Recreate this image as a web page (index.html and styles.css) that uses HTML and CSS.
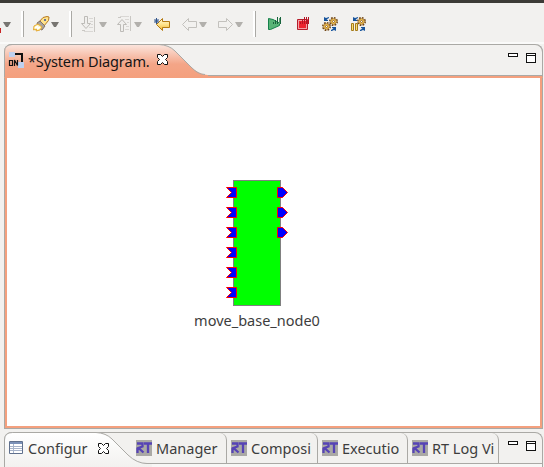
FILE: index.html
```
<!DOCTYPE html>
<html lang="en">
<head>
<meta charset="utf-8">
<title>System Diagram</title>
<link rel="stylesheet" href="styles.css">
</head>
<body>
<svg class="defs" aria-hidden="true">
  <defs>
    <linearGradient id="gold" x2="0" y2="1"><stop stop-color="#fffbe0"/><stop offset=".5" stop-color="#ffe38a"/><stop offset="1" stop-color="#efb530"/></linearGradient>
    <linearGradient id="orange" x2="0" y2="1"><stop stop-color="#fbe4dc"/><stop offset=".6" stop-color="#f4a587"/><stop offset="1" stop-color="#f4a07e"/></linearGradient>
    <linearGradient id="pale" x2="0" y2="1"><stop stop-color="#fff"/><stop offset="1" stop-color="#f2f1ef"/></linearGradient>
    <symbol id="close" viewBox="0 0 11 11"><path d="M.5.5h3l2 2 2-2h3v3l-2 2 2 2v3h-3l-2-2-2 2h-3v-3l2-2-2-2z" fill="#fff" stroke="#111"/></symbol>
    <symbol id="back" viewBox="0 0 15 13"><path d="M.5 6.500 6.500.5v3h8v6h-8v3z"/></symbol>
    <symbol id="gear" viewBox="0 0 9 9"><circle cx="4.500" cy="4.500" r="3.700" fill="none" stroke="#704513" stroke-width="1.600" stroke-dasharray="1.700 1.200"/><circle cx="4.500" cy="4.500" r="2.800" fill="#f9cd58" stroke="#a06a20" stroke-width=".8"/><circle cx="4.500" cy="4.500" r="1" fill="#fff" stroke="#80501a" stroke-width=".8"/></symbol>
    <symbol id="turns" viewBox="0 0 16 14"><path d="M2 0v4h4V3L4.500 2.500 7 1V0L4 1zM14 14v-4h-4v1l1.500.5L9 13v1h1l2-1z" fill="#17549c"/></symbol>
    <symbol id="in" viewBox="0 0 11 11"><path d="M.5.5h10v10H.5l5-5z" fill="#00f" stroke="red"/></symbol>
    <symbol id="out" viewBox="0 0 11 11"><path d="M.5.5h5l5 5-5 5h-5z" fill="#00f" stroke="red"/></symbol>
    <symbol id="rt" viewBox="0 0 16 16"><path d="M0 0h16v16H0z" fill="#aaa9a5"/><path d="M1 3.500h5.500v3L2.500 8l5 4.500M1.500 8v5M8 3.500h8M12 3v10" fill="none" stroke="#5643b5" stroke-width="2.300"/></symbol>
  </defs>
</svg>
<div class="window">
  <header class="toolbar">
    <svg class="edge" viewBox="0 0 2 5"><path d="M0 0h1v5H0z" fill="#c82525"/></svg>
    <i class="drop first"></i>
    <i class="sep s1"></i>
    <svg class="rocket" viewBox="0 0 17 16"><path d="M6 6 10 1.500l4-1 2 .5-.5 3.500-5 6z" fill="#ffe28a" stroke="#b77b20"/><path d="m4 7 3-2 5 5-3 4-3-1z" fill="#a9a39c" stroke="#837368"/><path d="m5 8-4 2-.5 4 3-1-.5 2 4-1 2-3z" fill="#fff0a0" stroke="#e5aa33"/><path d="m2 12 3-2M4 13l3-2" stroke="#fff" stroke-width="2"/><circle cx="12" cy="4" r="1" fill="#334e9a"/></svg>
    <i class="drop d1"></i>
    <i class="sep s2"></i>
    <svg class="annot" viewBox="0 0 15 17"><path d="M3.500.5h3v7h3l-4.500 5-4.500-5h3z" fill="#f0efed" stroke="#bdbbb7"/><path d="M8 2.500h4M9 5.500h3M10 8.500h2M8 11.500h4M3 15.500h9" stroke="#d9d7d4"/><path d="M13.500 1v15M1 14.500h3" stroke="#c9c7c3"/></svg>
    <i class="drop off d2"></i>
    <svg class="annot a2" viewBox="0 0 15 17"><path d="M3.500 15.500h3v-7h3L5 3.500.5 8.500h3z" fill="#f0efed" stroke="#bdbbb7"/><path d="M3 .5h9M8 3.500h4M10 6.500h2M9 10.500h3M8 13.500h4" stroke="#d9d7d4"/><path d="M13.500 0v15M1 1.500h3" stroke="#c9c7c3"/></svg>
    <i class="drop off d3"></i>
    <svg class="last" viewBox="0 0 17 13"><path d="M2.500 6.500 8.500.5v3h7v6h-7v3z" fill="url(#gold)" stroke="#b47a12"/><path d="M2.500 0v6M0 3h5M.5 1l4 4M4.500 1l-4 4" stroke="#31558b"/></svg>
    <svg class="nav n1"><use href="#back"/></svg>
    <i class="drop off d4"></i>
    <svg class="nav n2"><use href="#back"/></svg>
    <i class="drop off d5"></i>
    <i class="sep s3"></i>
    <svg class="run" viewBox="0 0 14 14"><path d="M.5 1.500v11h2l9-4V6L5 2.500z" fill="#58b477" stroke="#16814b"/><path d="M5.500 7V5M7.500 7V3M9.500 7V0M12.500 0v7" stroke="#17633c"/><path d="M11.500 1v6" stroke="#5aa171"/></svg>
    <svg class="stop" viewBox="0 0 13 14"><path d="M.5 2.500h10v10H.5z" fill="#f3a2a7" stroke="#b51d2b"/><path d="M2 4h7v7H2z" fill="#ed2530"/><path d="M3.500 7V5M5.500 7V3M7.500 7V0M9.500 7V0M11.500 7V0" stroke="#b51524"/></svg>
    <svg class="gears" viewBox="0 0 16 14"><use href="#turns" width="16" height="14"/><use href="#gear" x="7" width="9" height="9"/><use href="#gear" y="5" width="9" height="9"/></svg>
    <svg class="gears g2" viewBox="0 0 16 14"><use href="#turns" width="16" height="14"/><use href="#gear" x="6" width="9" height="9"/><path d="M.5 6.500h2v7h-2zM4.500 6.500h2v7h-2z" fill="#f8de78" stroke="#a57b1a"/></svg>
  </header>
  <main class="workbench">
    <section class="editor">
      <div class="editor-head">
        <svg class="tab-shape" viewBox="0 0 201 33"><path d="M0 33V8Q0 1 8 1H155Q165 1 171 7L187 23Q196 31 204 31V33Z" fill="url(#orange)"/><path d="M.5 33V8Q.5.5 8.500.5H155Q165 1 171 7L187 23Q194 30.500 201 30.500" fill="none" stroke="#aaa9a5"/></svg>
        <div class="editor-tab">
          <svg class="diagram-icon" viewBox="0 0 16 16"><path d="M5 2h8v9" fill="none" stroke="#111" stroke-width="2"/><path d="M0 0h6v5H0zM9 10h6v6H9z" fill="#bed0ef"/><path d="M.5 8.500h3v5h-3zM5.500 14V8l3 5.500V8" fill="none" stroke="#111" stroke-width="1.200"/></svg>
          <span class="title">*System Diagram.</span>
          <svg class="x"><use href="#close"/></svg>
        </div>
        <div class="controls"><i class="min"></i><i class="max"></i></div>
      </div>
      <div class="canvas">
        <div class="node">
          <div class="component">
            <div class="ports inputs"><svg><use href="#in"/></svg><svg><use href="#in"/></svg><svg><use href="#in"/></svg><svg><use href="#in"/></svg><svg><use href="#in"/></svg><svg><use href="#in"/></svg></div>
            <div class="ports outputs"><svg><use href="#out"/></svg><svg><use href="#out"/></svg><svg><use href="#out"/></svg></div>
          </div>
          <span class="node-name">move_base_node0</span>
        </div>
      </div>
    </section>
    <section class="views">
      <svg class="view-shape" viewBox="0 0 148 36"><path d="M.5 36V8Q.5.5 8.500.5H92Q102 1 108 7L124 23Q133 31.500 143 31.500H148V36Z" fill="url(#pale)"/><path d="M.5 36V8Q.5.500 8.500.5H92Q102 1 108 7L124 23Q133 31.500 143 31.500H148" fill="none" stroke="#aaa9a5"/></svg>
      <div class="view-tab active"><svg class="table" viewBox="0 0 14 13"><path d="M.5.5h13v12H.5z" fill="#fff" stroke="#60708d"/><path d="M1 1h12v2H1z" fill="#7b91b8"/><path d="M1 5.500h12M1 7.500h12M1 9.500h12M4.500 3v9" stroke="#a8b4ca"/></svg><span class="t-config">Configur</span><svg class="x"><use href="#close"/></svg></div>
      <div class="view-tab manager"><svg class="rt"><use href="#rt"/></svg><span class="t-manager">Manager</span></div>
      <div class="view-tab composite"><svg class="rt"><use href="#rt"/></svg><span class="t-comp">Composi</span></div>
      <div class="view-tab execution"><svg class="rt"><use href="#rt"/></svg><span class="t-exec">Executio</span></div>
      <div class="view-tab log"><svg class="rt"><use href="#rt"/></svg><span class="t-log">RT Log Vi</span></div>
      <div class="controls"><i class="min"></i><i class="max"></i></div>
    </section>
  </main>
</div>
</body>
</html>
```
FILE: styles.css
```
* { box-sizing: border-box; }
body { margin: 0; background: #f2f1ef; color: #3d3d3d; font: 14.5px/20px "Noto Sans", "Open Sans", sans-serif; }
svg { display: block; flex: none; overflow: visible; }
.defs { position: absolute; width: 0; height: 0; }
.window { width: 544px; height: 467px; overflow: hidden; }
.toolbar { display: flex; align-items: flex-start; height: 44px; border-top: 3px solid #3c3b37; border-bottom: 2px solid #fafaf9; background: #f2f1ef; }
.edge { width: 2px; height: 5px; margin-top: 25px; }
.drop { flex: none; width: 8px; height: 5px; margin-top: 19px; background: #777571; clip-path: polygon(0 0, 100% 0, 62% 100%, 38% 100%); }
.drop.off { background: #b2b0ac; }
.first { margin-left: 1px; }
.sep { flex: none; width: 3px; height: 26px; margin-top: 8px; border-left: 2px solid #fff; border-right: 1px solid #aaa9a5; }
.s1 { margin-left: 10px; }
.rocket { width: 17px; height: 16px; margin: 13px 0 0 9px; }
.d1 { margin-left: 1px; }
.s2 { margin-left: 10px; }
.annot { width: 15px; height: 17px; margin: 13px 0 0 9px; }
.d2 { margin-left: 3px; }
.a2 { margin-left: 10px; }
.d3 { margin-left: 2px; }
.last { width: 17px; height: 13px; margin: 15px 0 0 12px; }
.nav { width: 15px; height: 13px; margin-top: 15px; fill: #f2f1ef; stroke: #c3c1bd; }
.n1 { margin-left: 11px; }
.d4 { margin-left: 2px; }
.n2 { margin-left: 11px; transform: scaleX(-1); }
.d5 { margin-left: 2px; }
.s3 { margin-left: 10px; }
.run { width: 14px; height: 14px; margin: 14px 0 0 12px; }
.stop { width: 13px; height: 14px; margin: 14px 0 0 15px; }
.gears { width: 16px; height: 14px; margin: 14px 0 0 12px; }
.g2 { margin-left: 13px; }
.workbench { display: grid; grid-template-rows: 385px 1fr; gap: 3px; width: 539px; height: 423px; margin-left: 4px; }
.editor { display: grid; grid-template-rows: 34px 1fr; border: 1px solid #aaa9a5; border-top: 0; border-radius: 8px 8px 0 0; }
.editor-head { position: relative; display: flex; justify-content: space-between; margin: 0 -1px; border: 1px solid #aaa9a5; border-bottom: 2px solid #f4a07e; border-radius: 8px 8px 0 0; background: linear-gradient(#f2f1ef 30px, #aaa9a5 30px, #aaa9a5 31px, #f4a07e 31px); }
.tab-shape { position: absolute; left: -1px; top: -1px; width: 201px; height: 33px; }
.editor-tab { position: relative; display: flex; padding: 7px 0 0 4px; color: #151515; }
.diagram-icon { width: 16px; height: 16px; }
.title { width: 121px; margin: -1px 0 0 3px; letter-spacing: -.13px; white-space: nowrap; }
.x { width: 11px; height: 11px; margin: 3px 0 0 8px; }
.editor-tab .x { margin-top: 2px; }
.controls { display: flex; gap: 8px; padding: 8px 6px 0 0; }
.min { width: 10px; height: 4px; border: 1px solid #111; background: #fff; }
.max { width: 10px; height: 10px; border: 1px solid #111; background: linear-gradient(#fff 1px, #111 1px, #111 2px, #fff 2px); }
.canvas { border: 2px solid #f4a07e; border-top: 0; background: #fff; }
.node { display: flex; flex-direction: column; align-items: center; width: 150px; margin: 102px 0 0 175px; }
.component { display: flex; justify-content: space-between; width: 48px; height: 126px; border: 1px solid #808080; background: #0f0; }
.ports { display: flex; flex-direction: column; gap: 9px; padding-top: 6px; }
.ports svg { width: 11px; height: 11px; }
.inputs { margin-left: -8px; }
.outputs { margin-right: -8px; }
.node-name { margin-top: 4px; white-space: nowrap; }
.views { position: relative; display: flex; border: 1px solid #aaa9a5; border-bottom: 0; border-radius: 8px 8px 0 0; background: linear-gradient(#f2f1ef 30px, #aaa9a5 30px, #aaa9a5 31px, #f8f7f6 31px); }
.view-shape { position: absolute; left: -1px; top: -1px; width: 148px; height: 36px; }
.view-tab { position: relative; display: flex; height: 31px; padding-top: 7px; white-space: nowrap; }
.view-tab span { margin-top: -2px; }
.view-tab:not(.active) { border-right: 1px solid #aaa9a5; border-radius: 0 7px 0 0; }
.active { width: 131px; padding-left: 4px; }
.table { width: 14px; height: 13px; margin-top: 1px; }
.t-config { width: 62px; margin-left: 5px; }
.view-tab .x { margin-left: 8px; }
.rt { width: 16px; height: 16px; }
.rt + span { margin-left: 4px; }
.manager { width: 91px; }
.composite { width: 91px; padding-left: 4px; }
.execution { width: 90px; padding-left: 4px; }
.log { width: 91px; padding-left: 4px; }
.views .controls { margin-left: 9px; padding-right: 0; }
```
